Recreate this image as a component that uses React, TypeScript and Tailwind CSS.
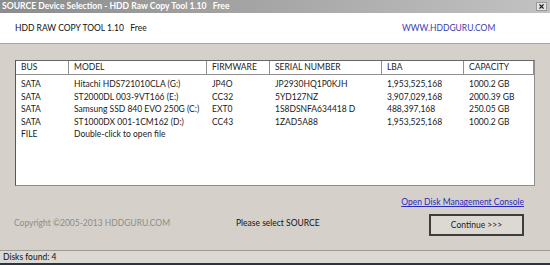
import { X } from "lucide-react"

type Disk = {
  bus: string
  model: string
  firmware: string
  serial: string
  lba: string
  capacity: string
}

const disks: Disk[] = [
  { bus: "SATA", model: "Hitachi HDS721010CLA (G:)", firmware: "JP4O", serial: "JP2930HQ1P0KJH", lba: "1,953,525,168", capacity: "1000.2 GB" },
  { bus: "SATA", model: "ST2000DL 003-9VT166 (E:)", firmware: "CC32", serial: "5YD127NZ", lba: "3,907,029,168", capacity: "2000.39 GB" },
  { bus: "SATA", model: "Samsung SSD 840 EVO 250G (C:)", firmware: "EXT0", serial: "1S8DSNFA634418 D", lba: "488,397,168", capacity: "250.05 GB" },
  { bus: "SATA", model: "ST1000DX 001-1CM162 (D:)", firmware: "CC43", serial: "1ZAD5A88", lba: "1,953,525,168", capacity: "1000.2 GB" },
  { bus: "FILE", model: "Double-click to open file", firmware: "", serial: "", lba: "", capacity: "" },
]

// column widths in px, header separators included
const cols = [
  { label: "BUS", w: "w-[53px]" },
  { label: "MODEL", w: "w-[138px]" },
  { label: "FIRMWARE", w: "w-[63px]" },
  { label: "SERIAL NUMBER", w: "w-[112px]" },
  { label: "LBA", w: "w-[82px]" },
  { label: "CAPACITY", w: "w-[70px]" },
]

export default function App() {
  return (
    <div className="w-[550px] h-[265px] flex flex-col bg-[#d5d1ca] overflow-hidden font-['Lato',sans-serif] text-[8.5px] text-[#1a1a1a]">
      {/* Title bar */}
      <div className="h-[13px] shrink-0 flex items-center justify-between bg-gradient-to-r from-[#8c8c8c] to-[#c2c2c2] pl-[2px] pr-[3px]">
        <span className="text-white font-bold text-[8.6px] leading-none whitespace-pre">
          SOURCE Device Selection - HDD Raw Copy Tool 1.10   Free
        </span>
        <div className="w-[11px] h-[9px] flex items-center justify-center bg-[#e4e4e4] border border-[#9a9a9a]">
          <X className="w-[7px] h-[7px] text-[#222]" strokeWidth={4} />
        </div>
      </div>

      {/* Header panel */}
      <div className="h-[31px] shrink-0 flex items-center bg-white border-b border-[#a9a6a0] pl-[15px]">
        <span className="w-[387px] whitespace-pre text-[#111]">HDD RAW COPY TOOL 1.10   Free</span>
        <span className="text-[#3b3bb3]">WWW.HDDGURU.COM</span>
      </div>

      {/* Disk list */}
      <div className="mt-[16px] ml-[15px] w-[520px] h-[126px] shrink-0 bg-white border border-[#8e8e8e] border-l-[#555] border-t-[#666]">
        <div className="flex h-[14px] border-b border-[#8f8f8f]">
          {cols.map((c) => (
            <div key={c.label} className={`${c.w} shrink-0 flex items-center pl-[5px] border-r border-[#8f8f8f] text-[#222] leading-none`}>
              {c.label}
            </div>
          ))}
        </div>
        <div className="pt-[3px]">
          {disks.map((d, i) => (
            <div key={i} className="flex h-[12.5px] items-center leading-none">
              {[d.bus, d.model, d.firmware, d.serial, d.lba, d.capacity].map((v, j) => (
                <div key={j} className={`${cols[j].w} shrink-0 pl-[5px] whitespace-nowrap`}>
                  {v}
                </div>
              ))}
            </div>
          ))}
        </div>
      </div>

      {/* Footer */}
      <div className="flex-1 flex flex-col pt-[5px]">
        <div className="h-[23px] flex items-center justify-end pr-[26px]">
          <span className="text-[#2a2ac0] underline">Open Disk Management Console</span>
        </div>
        <div className="flex items-center h-[22px]">
          <span className="w-[236px] pl-[14px] pb-[3px] text-[#8d8b88]">Copyright ©2005-2013 HDDGURU.COM</span>
          <span className="w-[193px] pb-[3px] text-[#111]">Please select SOURCE</span>
          <button className="w-[95px] h-[22px] bg-[#dcd9d3] border-2 border-[#3d3d3d] text-[8.5px] text-[#222]">
            Continue &gt;&gt;&gt;
          </button>
        </div>
      </div>

      {/* Status bar */}
      <div className="h-[15px] shrink-0 flex items-center border-t border-[#9d9a94] bg-[#dcd9d3] border-b-[2px] border-b-[#2c3346] pl-[3px]">
        <span className="text-[#111] leading-none">Disks found: 4</span>
      </div>
    </div>
  )
}
